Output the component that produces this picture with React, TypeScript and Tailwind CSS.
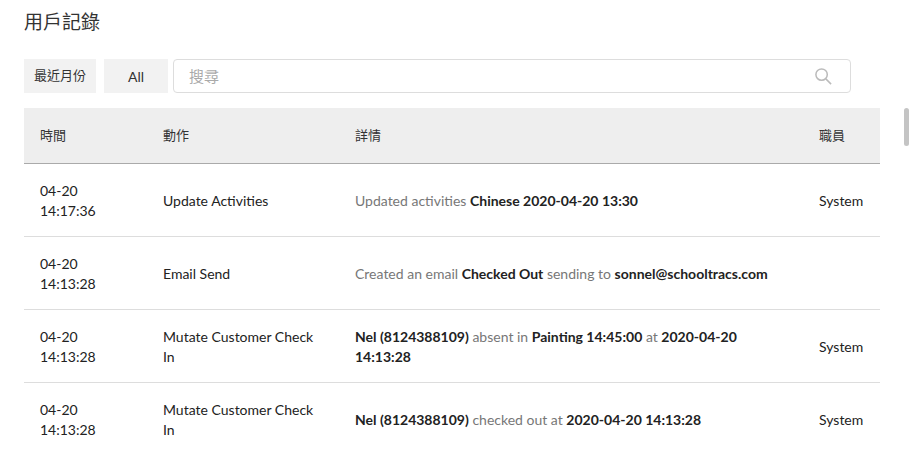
import React from 'react';

const rows = [
  {
    time: ['04-20', '14:17:36'],
    action: 'Update Activities',
    detail: (
      <>
        <span className="text-[#777]">Updated activities </span>
        <b>Chinese 2020-04-20 13:30</b>
      </>
    ),
    staff: 'System',
  },
  {
    time: ['04-20', '14:13:28'],
    action: 'Email Send',
    detail: (
      <>
        <span className="text-[#777]">Created an email </span>
        <b>Checked Out</b>
        <span className="text-[#777]"> sending to </span>
        <b>sonnel@schooltracs.com</b>
      </>
    ),
    staff: '',
  },
  {
    time: ['04-20', '14:13:28'],
    action: 'Mutate Customer Check In',
    detail: (
      <>
        <b>Nel (8124388109)</b>
        <span className="text-[#777]"> absent in </span>
        <b>Painting 14:45:00</b>
        <span className="text-[#777]"> at </span>
        <b>2020-04-20 14:13:28</b>
      </>
    ),
    staff: 'System',
  },
  {
    time: ['04-20', '14:13:28'],
    action: 'Mutate Customer Check In',
    detail: (
      <>
        <b>Nel (8124388109)</b>
        <span className="text-[#777]"> checked out at </span>
        <b>2020-04-20 14:13:28</b>
      </>
    ),
    staff: 'System',
  },
];

export default function App() {
  return (
    <div
      className="relative h-[452px] w-[910px] overflow-hidden bg-white text-[#222]"
      style={{ fontFamily: 'Lato, "Noto Sans CJK TC", sans-serif' }}
    >
      <div className="absolute right-[1px] top-[108px] h-[38px] w-[5px] rounded-full bg-[#c4c4c4]" />
      <div className="px-6 pt-[9px]">
        <h1 className="text-[19px] leading-[26px] text-[#333]">用戶記錄</h1>
        <div className="mt-[24px] flex h-[34px] gap-2 text-[13px]">
          <div className="flex w-[72px] items-center justify-center bg-[#f2f2f2] text-[#333]">最近月份</div>
          <div className="flex w-[64px] items-center justify-center bg-[#f2f2f2] text-[14px] text-[#333]">All</div>
          <div className="ml-[-3px] flex w-[678px] items-center justify-between rounded border border-[#ddd] pl-[15px] pr-[17px] text-[15px] text-[#aaa]">
            <span>搜尋</span>
            <svg width="19" height="19" viewBox="0 0 20 20" fill="none" stroke="#bbb" strokeWidth="1.6">
              <circle cx="8" cy="8" r="6" />
              <path d="M12.5 12.5 18 18" />
            </svg>
          </div>
        </div>
        <div className="mt-[15px] w-[856px] text-[14px]">
          <div className="flex h-[56px] items-center border-b border-[#aaa] bg-[#eee] text-[13px] text-[#333]">
            <div className="w-[139px] pl-4">時間</div>
            <div className="w-[192px]">動作</div>
            <div className="w-[464px]">詳情</div>
            <div className="flex-1">職員</div>
          </div>
          {rows.map((r, i) => (
            <div key={i} className="flex h-[73px] items-center border-b border-[#ddd] pt-[2px] leading-[20px]">
              <div className="w-[139px] pl-4">
                {r.time[0]}
                <br />
                {r.time[1]}
              </div>
              <div className="w-[192px] pr-8">{r.action}</div>
              <div className="w-[464px] pr-[36px]">{r.detail}</div>
              <div className="flex-1">{r.staff}</div>
            </div>
          ))}
        </div>
      </div>
    </div>
  );
}
